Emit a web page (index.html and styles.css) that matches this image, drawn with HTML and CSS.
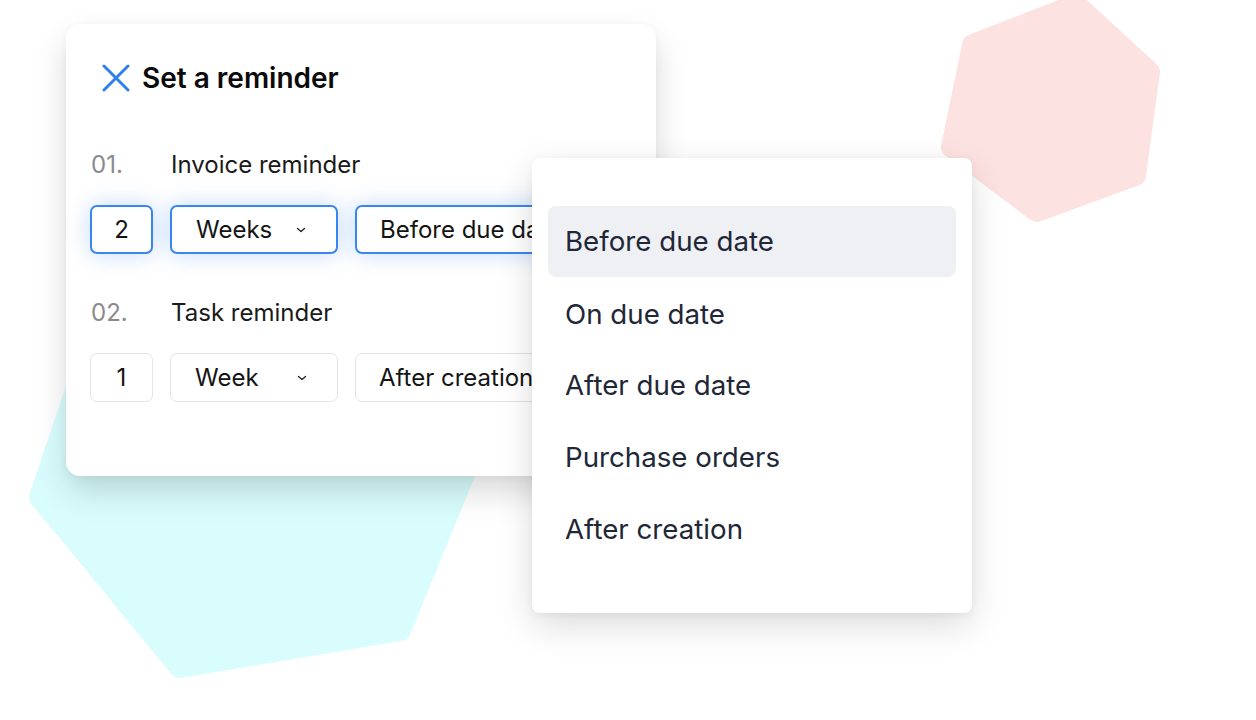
FILE: index.html
```html
<!DOCTYPE html>
<html>
<head>
<meta charset="utf-8">
<link rel="stylesheet" href="styles.css">
</head>
<body>
<div class="stage">
  <svg class="hex hex-pink" width="260" height="260" viewBox="0 0 260 260">
    <polygon points="35,48 138,8 211,75 197,178 99,214 14,150" />
  </svg>
  <svg class="hex hex-cyan" width="520" height="480" viewBox="0 0 520 480">
    <polygon points="40,297 110,90 330,60 480,235 400,430 180,467" />
  </svg>

  <div class="card">
    <div class="title">
      <svg class="close" width="28" height="28" viewBox="0 0 28 28"><path d="M2 2 L26 26 M26 2 L2 26" /></svg>
      <span>Set a reminder</span>
    </div>

    <div class="label"><span class="num">01.</span><span>Invoice reminder</span></div>
    <div class="fields active">
      <div class="field num-field">2</div>
      <div class="field select">Weeks <svg class="chev" width="10" height="6" viewBox="0 0 10 6"><path d="M1.5 1.5 L5 4.5 L8.5 1.5" /></svg></div>
      <div class="field wide">Before due date</div>
    </div>

    <div class="label"><span class="num">02.</span><span>Task reminder</span></div>
    <div class="fields">
      <div class="field num-field">1</div>
      <div class="field select">Week <svg class="chev" width="10" height="6" viewBox="0 0 10 6"><path d="M1.5 1.5 L5 4.5 L8.5 1.5" /></svg></div>
      <div class="field wide">After creation</div>
    </div>
  </div>

  <div class="menu">
    <div class="item selected">Before due date</div>
    <div class="item">On due date</div>
    <div class="item">After due date</div>
    <div class="item">Purchase orders</div>
    <div class="item">After creation</div>
  </div>
</div>
</body>
</html>
```

FILE: styles.css
```css
html, body {
  margin: 0;
  padding: 0;
  background: #ffffff;
}

body {
  font-family: Inter, "Noto Sans", "Liberation Sans", sans-serif;
  width: 1256px;
  height: 720px;
  overflow: hidden;
}

.stage {
  position: relative;
  width: 1256px;
  height: 720px;
  padding: 24px 0 0 66px;
  box-sizing: border-box;
}

.hex {
  position: absolute;
}

.hex polygon {
  stroke-linejoin: round;
  stroke-width: 22;
}

.hex-pink {
  left: 938px;
  top: -3px;
}

.hex-pink polygon {
  fill: #fde2e2;
  stroke: #fde2e2;
}

.hex-cyan {
  left: 0;
  top: 200px;
}

.hex-cyan polygon {
  fill: #d9fdfd;
  stroke: #d9fdfd;
}

.card {
  position: relative;
  width: 590px;
  height: 452px;
  box-sizing: border-box;
  background: #ffffff;
  border-radius: 14px;
  box-shadow: 0 16px 32px rgba(0, 0, 0, 0.15), 0 2px 8px rgba(0, 0, 0, 0.04);
  padding: 38px 0 0 24px;
  overflow: hidden;
}

.title {
  display: flex;
  align-items: center;
  gap: 12px;
  height: 32px;
  padding-left: 12px;
  font-size: 28px;
  font-weight: 600;
  color: #0a0a0a;
}

.close path {
  stroke: #2f80ed;
  stroke-width: 3;
  stroke-linecap: round;
  fill: none;
}

.label {
  display: flex;
  align-items: center;
  height: 24px;
  margin-top: 58px;
  font-size: 24px;
  color: #1a1a1a;
}

.label + .fields {
  margin-top: 29px;
}

.fields + .label {
  margin-top: 46px;
}

.num {
  width: 80px;
  color: #8a8a8a;
  padding-left: 1px;
}

.fields {
  display: flex;
  gap: 17px;
}

.field {
  height: 49px;
  box-sizing: border-box;
  border: 1.5px solid #e4e4e4;
  border-radius: 7px;
  display: flex;
  align-items: center;
  font-size: 24px;
  color: #141414;
  background: #ffffff;
  white-space: nowrap;
  flex-shrink: 0;
}

.active .field {
  border: 2px solid #3a86f0;
  box-shadow: 0 0 22px rgba(59, 135, 238, 0.3);
}

.num-field {
  width: 63px;
  justify-content: center;
}

.select {
  width: 168px;
  padding: 0 30px 0 24px;
  justify-content: space-between;
}

.wide {
  width: 260px;
  padding-left: 23px;
}

.chev path {
  stroke: #222;
  stroke-width: 1.3;
  fill: none;
  stroke-linecap: round;
  stroke-linejoin: round;
}

.menu {
  position: absolute;
  left: 532px;
  top: 158px;
  width: 440px;
  height: 455px;
  box-sizing: border-box;
  padding: 48px 16px;
  background: #ffffff;
  border-radius: 8px;
  box-shadow: 0 12px 36px rgba(0, 0, 0, 0.14), 0 2px 8px rgba(0, 0, 0, 0.05);
  display: flex;
  flex-direction: column;
}

.item {
  height: 72px;
  display: flex;
  align-items: center;
  padding-left: 17px;
  font-size: 27.7px;
  color: #222737;
  border-radius: 8px;
}

.item.selected {
  background: #eef0f4;
  height: 71px;
  margin-bottom: 1px;
}
```
